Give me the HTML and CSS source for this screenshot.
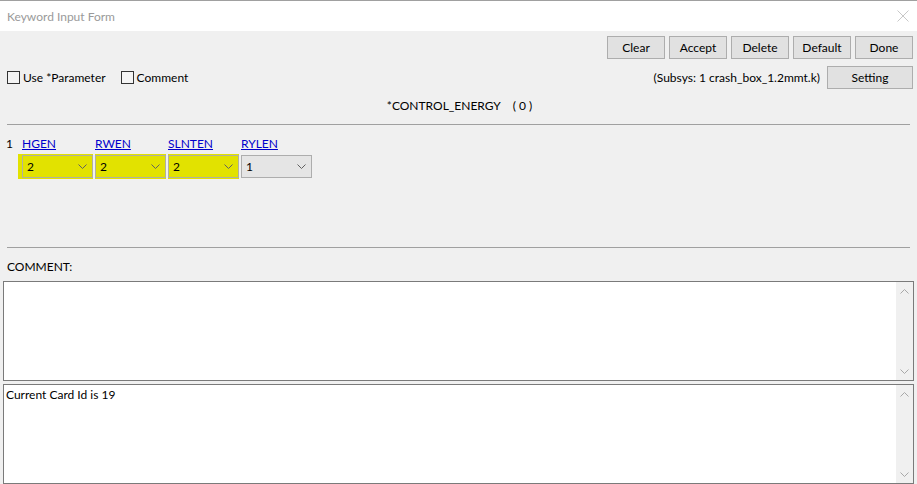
FILE: index.html
```html
<!DOCTYPE html>
<html>
<head>
<meta charset="utf-8">
<link rel="stylesheet" href="styles.css">
</head>
<body>
<div class="window">
  <div class="titlebar">
    <span class="title">Keyword Input Form</span>
    <svg class="close" width="12" height="12" viewBox="0 0 12 12"><path d="M0.5 0.5 L11.5 11.5 M11.5 0.5 L0.5 11.5" stroke="#c8c8c8" stroke-width="1" fill="none"/></svg>
  </div>
  <div class="content">
    <div class="toolbar">
      <button class="btn">Clear</button>
      <button class="btn">Accept</button>
      <button class="btn">Delete</button>
      <button class="btn">Default</button>
      <button class="btn">Done</button>
    </div>
    <div class="row2">
      <div class="checks">
        <label class="check"><span class="box"></span>Use *Parameter</label>
        <label class="check"><span class="box"></span>Comment</label>
      </div>
      <div class="subsys">
        <span>(Subsys: 1 crash_box_1.2mmt.k)</span>
        <button class="btn setting">Setting</button>
      </div>
    </div>
    <div class="heading">*CONTROL_ENERGY&nbsp;&nbsp;&nbsp;&nbsp;( 0 )</div>
    <div class="sep"></div>
    <div class="card">
      <div class="cardnum">1</div>
      <div class="fields">
        <div class="field first">
          <a class="flabel">HGEN</a>
          <div class="cell hl"><div class="select"><span>2</span><svg width="9" height="5" viewBox="0 0 9 5"><path d="M0.5 0.5 L4.5 4.5 L8.5 0.5" stroke="#606060" fill="none"/></svg></div></div>
        </div>
        <div class="field">
          <a class="flabel">RWEN</a>
          <div class="cell hl"><div class="select"><span>2</span><svg width="9" height="5" viewBox="0 0 9 5"><path d="M0.5 0.5 L4.5 4.5 L8.5 0.5" stroke="#606060" fill="none"/></svg></div></div>
        </div>
        <div class="field">
          <a class="flabel">SLNTEN</a>
          <div class="cell hl"><div class="select"><span>2</span><svg width="9" height="5" viewBox="0 0 9 5"><path d="M0.5 0.5 L4.5 4.5 L8.5 0.5" stroke="#606060" fill="none"/></svg></div></div>
        </div>
        <div class="field">
          <a class="flabel">RYLEN</a>
          <div class="cell"><div class="select plain"><span>1</span><svg width="9" height="5" viewBox="0 0 9 5"><path d="M0.5 0.5 L4.5 4.5 L8.5 0.5" stroke="#606060" fill="none"/></svg></div></div>
        </div>
      </div>
    </div>
    <div class="sep sep2"></div>
    <div class="comment-label">COMMENT:</div>
    <div class="textbox">
      <div class="tb-text"></div>
      <div class="scroll">
        <svg width="9" height="5" viewBox="0 0 9 5"><path d="M0.5 4.5 L4.5 0.5 L8.5 4.5" stroke="#a8a8a8" fill="none"/></svg>
        <svg width="9" height="5" viewBox="0 0 9 5"><path d="M0.5 0.5 L4.5 4.5 L8.5 0.5" stroke="#a8a8a8" fill="none"/></svg>
      </div>
    </div>
    <div class="textbox second">
      <div class="tb-text">Current Card Id is 19</div>
      <div class="scroll">
        <svg width="9" height="5" viewBox="0 0 9 5"><path d="M0.5 4.5 L4.5 0.5 L8.5 4.5" stroke="#a8a8a8" fill="none"/></svg>
        <svg width="9" height="5" viewBox="0 0 9 5"><path d="M0.5 0.5 L4.5 4.5 L8.5 0.5" stroke="#a8a8a8" fill="none"/></svg>
      </div>
    </div>
  </div>
</div>
</body>
</html>
```
FILE: styles.css
```css
* { box-sizing: border-box; }
html, body { margin: 0; padding: 0; }
body {
  width: 917px;
  height: 484px;
  overflow: hidden;
  background: #f0f0f0;
  font-family: Lato, "Noto Sans", sans-serif;
  font-size: 12px;
  color: #000;
}
.window { width: 917px; height: 484px; }
.titlebar {
  height: 31px;
  background: #fff;
  border-top: 1px solid #a0a0a0;
  display: flex;
  align-items: center;
  justify-content: space-between;
  padding: 0 7px 0 7px;
}
.title { color: #9a9a9a; font-size: 12px; }
.close { margin-right: 1px; }
.content { padding: 0 4px 0 3px; }
.toolbar {
  display: flex;
  justify-content: flex-end;
  gap: 4px;
  padding-top: 5px;
}
.btn {
  font-family: inherit;
  font-size: 12px;
  color: #000;
  width: 58px;
  height: 23px;
  background: #e1e1e1;
  border: 1px solid #adadad;
  padding: 0;
  margin: 0;
}
.row2 {
  display: flex;
  justify-content: space-between;
  align-items: center;
  margin-top: 7px;
  height: 23px;
}
.checks { display: flex; gap: 15px; padding-left: 4px; }
.check { display: flex; align-items: center; gap: 3px; }
.box {
  width: 13px;
  height: 13px;
  border: 1px solid #333;
  background: #f4f4f4;
}
.subsys { display: flex; align-items: center; gap: 7px; }
.btn.setting { width: 86px; }
.heading {
  margin-top: 7px;
  height: 20px;
  line-height: 20px;
  text-align: center;
  padding-left: 3px;
}
.sep {
  margin: 8px 3px 0 4px;
  height: 1px;
  background: #a0a0a0;
}
.card {
  display: flex;
  height: 122px;
  padding-top: 11px;
}
.cardnum { width: 15px; padding-left: 3px; line-height: 16px; }
.fields { display: flex; gap: 2px; }
.field { display: flex; flex-direction: column; width: 71px; }
.field.first { width: 75px; }
.flabel {
  color: #0000cc;
  text-decoration: underline;
  line-height: 16px;
  cursor: pointer;
}
.field.first .flabel { padding-left: 4px; }
.cell {
  margin-top: 2px;
  height: 25px;
  padding: 1px 0;
}
.cell.hl { background: #e2e200; }
.field.first .cell { padding-left: 4px; }
.select {
  height: 23px;
  border: 1px solid #b0b0a0;
  display: flex;
  align-items: center;
  justify-content: space-between;
  padding: 0 5px 0 4px;
}
.select.plain { background: #e5e5e5; border-color: #adadad; }
.sep2 { margin-top: 0; }
.comment-label {
  margin-top: 11px;
  padding-left: 4px;
  line-height: 16px;
  height: 16px;
}
.textbox {
  margin-top: 6px;
  height: 100px;
  width: 911px;
  background: #fff;
  border: 1px solid #7a7a7a;
  display: flex;
}
.textbox.second { margin-top: 3px; }
.tb-text { flex: 1; padding: 2px 2px; line-height: 16px; }
.scroll {
  width: 17px;
  background: #f0f0f0;
  display: flex;
  flex-direction: column;
  justify-content: space-between;
  align-items: center;
  padding: 7px 0 6px;
}
```
